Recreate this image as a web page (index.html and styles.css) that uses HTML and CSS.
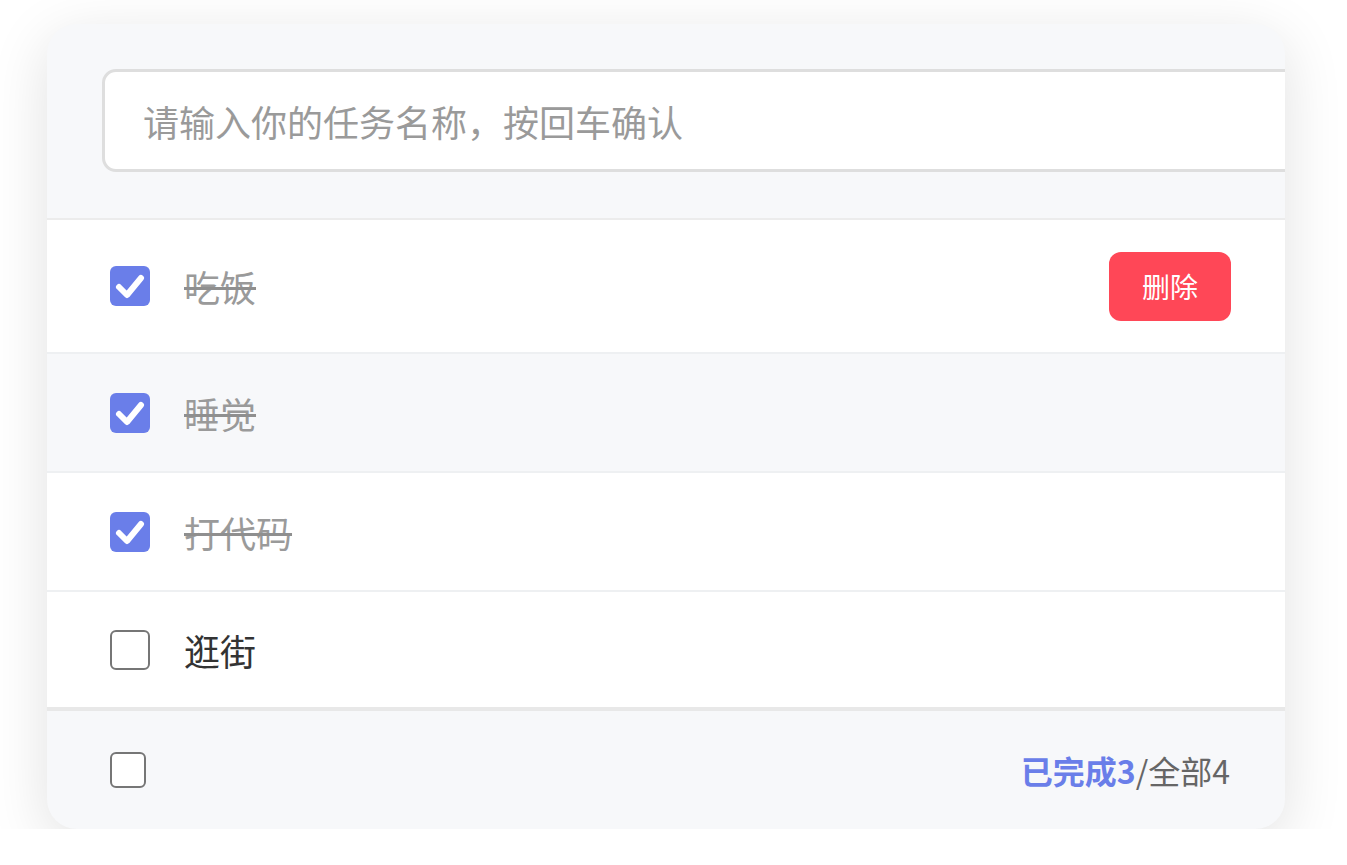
FILE: index.html
```html
<!DOCTYPE html>
<html lang="zh-CN">
<head>
<meta charset="utf-8">
<title>待办事项</title>
<link rel="stylesheet" href="styles.css">
</head>
<body>
<div class="todo">
  <header class="todo-header">
    <input class="todo-input" type="text" placeholder="请输入你的任务名称，按回车确认">
  </header>
  <ul class="todo-list">
    <li class="todo-item is-hover">
      <span class="box checked"><svg viewBox="0 0 40 40"><path d="M9 21 L17 29 L31 12" fill="none" stroke="#fff" stroke-width="6" stroke-linecap="round" stroke-linejoin="round"/></svg></span>
      <span class="label done">吃饭</span>
      <button class="btn-del">删除</button>
    </li>
    <li class="todo-item alt">
      <span class="box checked"><svg viewBox="0 0 40 40"><path d="M9 21 L17 29 L31 12" fill="none" stroke="#fff" stroke-width="6" stroke-linecap="round" stroke-linejoin="round"/></svg></span>
      <span class="label done">睡觉</span>
    </li>
    <li class="todo-item">
      <span class="box checked"><svg viewBox="0 0 40 40"><path d="M9 21 L17 29 L31 12" fill="none" stroke="#fff" stroke-width="6" stroke-linecap="round" stroke-linejoin="round"/></svg></span>
      <span class="label done">打代码</span>
    </li>
    <li class="todo-item">
      <span class="box"></span>
      <span class="label">逛街</span>
    </li>
  </ul>
  <footer class="todo-footer">
    <span class="box small"></span>
    <span class="count"><b>已完成3</b>/全部4</span>
  </footer>
</div>
</body>
</html>
```
FILE: styles.css
```css
html, body {
  margin: 0;
  background: #fff;
  font-family: "Noto Sans CJK SC", "Noto Sans", sans-serif;
}

.todo {
  width: 1238px;
  margin: 24px 0 0 47px;
  background: #f7f8fa;
  border-radius: 30px;
  overflow: hidden;
  box-shadow: 0 14px 60px rgba(0, 0, 0, 0.12);
}

.todo-header {
  padding: 45px 0 46px 55px;
  border-bottom: 2px solid #ececec;
}

.todo-input {
  display: block;
  box-sizing: border-box;
  width: 1240px;
  height: 103px;
  padding: 0 38px;
  border: 3px solid #dedede;
  border-radius: 14px;
  background: #fff;
  font-family: inherit;
  font-size: 36px;
  color: #333;
  outline: none;
}

.todo-input::placeholder {
  color: #9a9a9a;
}

.todo-list {
  list-style: none;
  margin: 0;
  padding: 0;
}

.todo-item {
  display: flex;
  align-items: center;
  height: 117px;
  padding: 0 54px 0 63px;
  background: #fff;
  border-bottom: 2px solid #eef0f2;
}

.todo-item.is-hover {
  height: 132px;
}

.todo-item.alt {
  background: #f7f8fa;
}

.todo-item:last-child {
  border-bottom: 4px solid #e8e8e8;
  height: 115px;
}

.box {
  box-sizing: border-box;
  width: 40px;
  height: 40px;
  flex: none;
  border: 2px solid #767676;
  border-radius: 6px;
  background: #fff;
  display: flex;
}

.box.checked {
  border: none;
  background: #6a7ee9;
}

.box svg {
  width: 40px;
  height: 40px;
}

.box.small {
  width: 36px;
  height: 36px;
}

.label {
  margin-left: 34px;
  font-size: 36px;
  line-height: 54px;
  color: #333;
}

.label.done {
  color: #9a9a9a;
  text-decoration: line-through;
  text-decoration-color: #8f8f8f;
  text-decoration-thickness: 3px;
}

.btn-del {
  margin-left: auto;
  width: 122px;
  height: 69px;
  border: none;
  border-radius: 12px;
  background: #ff4757;
  color: #fff;
  font-family: inherit;
  font-size: 28px;
}

.todo-footer {
  display: flex;
  align-items: center;
  justify-content: space-between;
  height: 118px;
  padding: 0 55px 0 63px;
}

.count {
  font-size: 32px;
  color: #666;
}

.count b {
  color: #6a7ee9;
  font-weight: 700;
}
```
